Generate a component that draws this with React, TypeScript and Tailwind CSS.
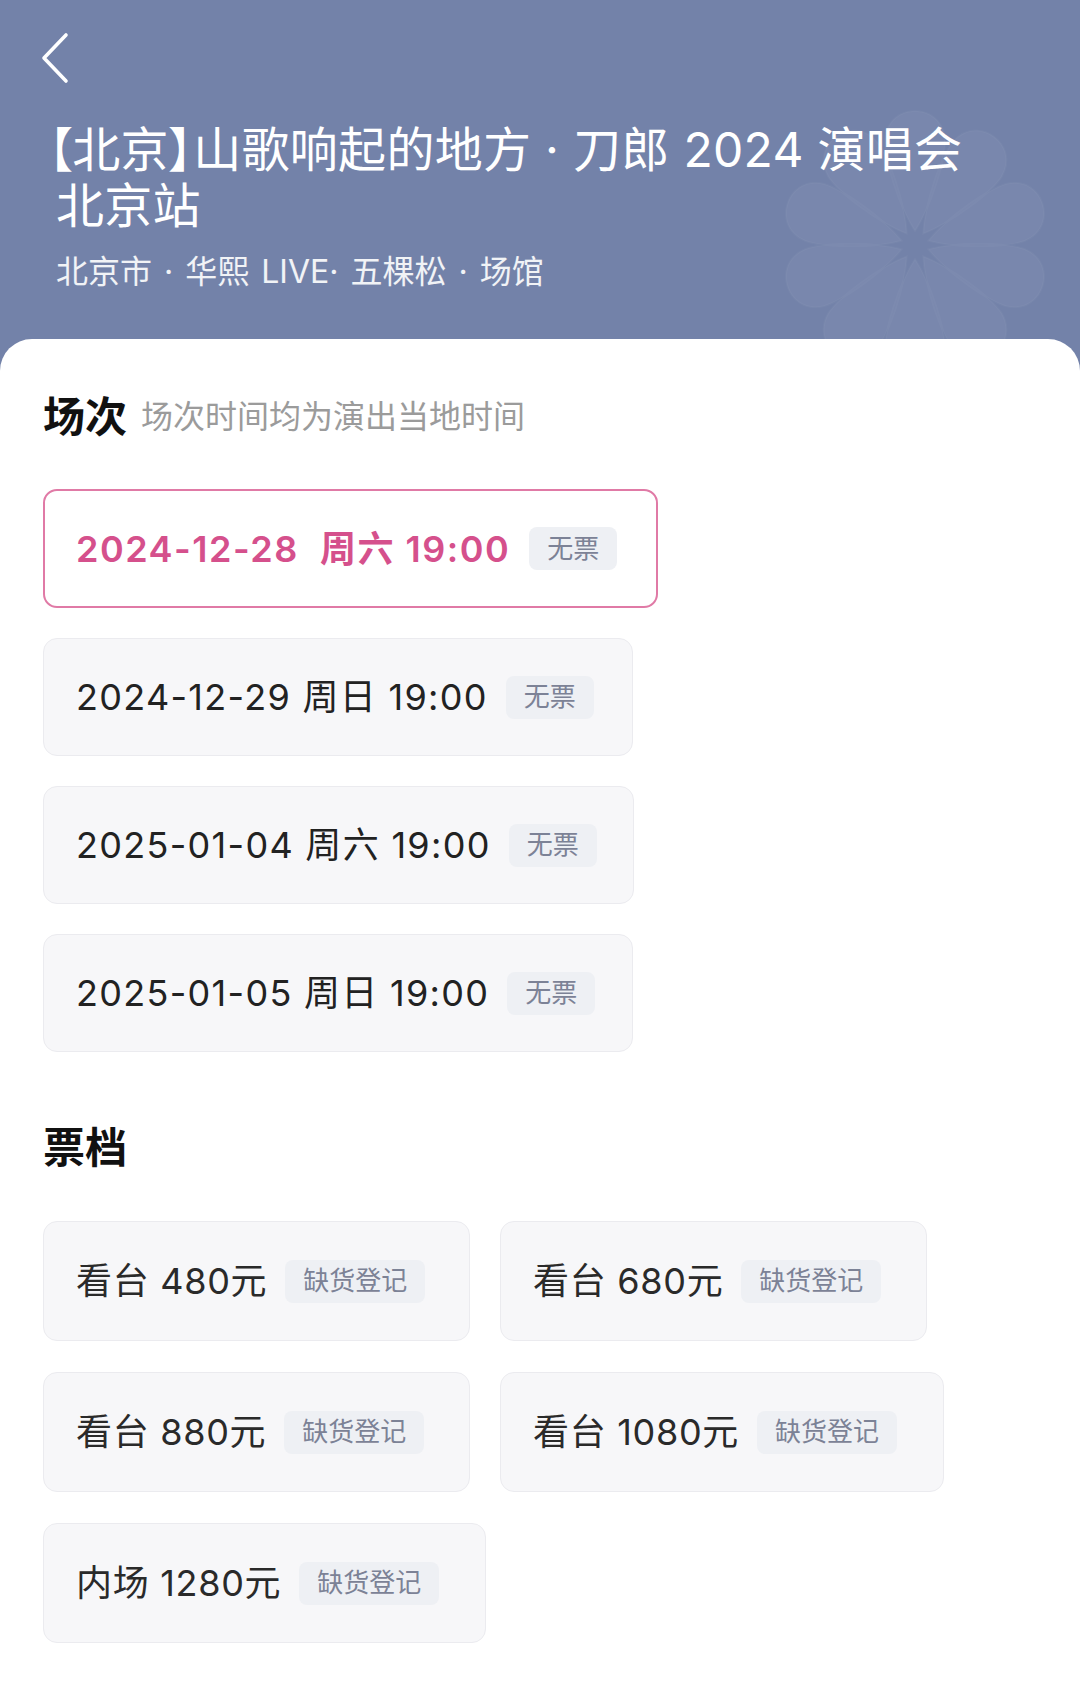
import React from "react";

type Session = { text: string; selected?: boolean; w: string };

const sessions: Session[] = [
  { text: "2024-12-28  周六 19:00", selected: true, w: "w-[615px]" },
  { text: "2024-12-29 周日 19:00", w: "w-[590px]" },
  { text: "2025-01-04 周六 19:00", w: "w-[591px]" },
  { text: "2025-01-05 周日 19:00", w: "w-[590px]" },
];

const tickets = [
  { text: "看台 480元", w: "w-[427px]" },
  { text: "看台 680元", w: "w-[427px]" },
  { text: "看台 880元", w: "w-[427px]" },
  { text: "看台 1080元", w: "w-[444px]" },
  { text: "内场 1280元", w: "w-[443px]" },
];

const PETAL =
  "M0,-14 C17,-40 31,-88 30,-106 C28,-126 13,-134 0,-134 C-13,-134 -28,-126 -30,-106 C-31,-88 -17,-40 0,-14 Z";

function Flower() {
  const petals = Array.from({ length: 10 }, (_, i) => i * 36);
  return (
    <svg
      className="absolute left-[770px] top-[100px] h-[290px] w-[290px]"
      viewBox="-145 -145 290 290"
    >
      <g opacity="0.045" fill="#ffffff">
        {petals.map((a) => (
          <path key={a} d={PETAL} transform={`rotate(${a})`} />
        ))}
      </g>
      <g opacity="0.025" fill="none" stroke="#ffffff" strokeWidth="2">
        {petals.map((a) => (
          <path key={a} d={PETAL} transform={`rotate(${a})`} />
        ))}
      </g>
    </svg>
  );
}

function Badge({ children }: { children: React.ReactNode }) {
  return (
    <span className="flex h-[43px] shrink-0 items-center rounded-[8px] bg-[#eef0f4] px-[18px] text-[26px] font-normal leading-none tracking-normal text-[#7c8296]">
      {children}
    </span>
  );
}

export default function App() {
  return (
    <div className="flex min-h-[1693px] w-full flex-col bg-[#7382a9] font-[Inter,'Noto_Sans_CJK_SC',sans-serif]">
      <header className="relative h-[339px] shrink-0 overflow-hidden pl-[56px] pr-[40px]">
        <Flower />
        <div className="relative pt-[32px]">
          <svg className="-ml-[15px] h-[52px] w-[28px]" viewBox="0 0 28 52" fill="none">
            <polyline
              points="25,3 3,26 25,49"
              stroke="#ffffff"
              strokeWidth="3.6"
              strokeLinecap="round"
              strokeLinejoin="round"
            />
          </svg>
          <h1 className="mt-[38px] text-[48px] font-normal leading-[56px] tracking-[0.3px] text-white">
            <span className="-ml-[8px] [font-feature-settings:'palt']">【北京】</span>
            山歌响起的地方 · 刀郎 2024 演唱会
            <br />
            北京站
          </h1>
          <p className="mt-[18px] text-[32px] leading-[40px] text-white/90 [word-spacing:3px]">
            北京市 · 华熙 LIVE· 五棵松 · 场馆
          </p>
        </div>
      </header>

      <main className="flex-1 rounded-t-[32px] bg-white px-[43px] pb-[50px] pt-[50px]">
        <div className="flex items-center leading-[56px]">
          <h2 className="text-[42px] font-bold text-[#111111]">场次</h2>
          <span className="ml-[14px] text-[32px] text-[#9b9b9b]">场次时间均为演出当地时间</span>
        </div>

        <div className="mt-[44px] flex flex-col gap-[30px]">
          {sessions.map((s) =>
            s.selected ? (
              <div
                key={s.text}
                className={`${s.w} flex h-[119px] items-center gap-[19px] rounded-[14px] border-2 border-[#e07aa6] bg-white pl-[31px]`}
              >
                <span className="whitespace-pre text-[36px] font-semibold tracking-[1.5px] text-[#d5508c]">{s.text}</span>
                <Badge>无票</Badge>
              </div>
            ) : (
              <div
                key={s.text}
                className={`${s.w} flex h-[118px] items-center gap-[18px] rounded-[14px] border border-[#ebebef] bg-[#f7f7f9] pl-[32px]`}
              >
                <span className="whitespace-pre text-[36px] tracking-[1.3px] text-[#222222]">{s.text}</span>
                <Badge>无票</Badge>
              </div>
            )
          )}
        </div>

        <h2 className="mt-[68px] text-[42px] font-bold leading-[56px] text-[#111111]">票档</h2>

        <div className="mt-[45px] flex flex-wrap gap-x-[30px] gap-y-[31px]">
          {tickets.map((t) => (
            <div
              key={t.text}
              className={`${t.w} flex h-[120px] items-center gap-[18px] rounded-[14px] border border-[#ebebef] bg-[#f7f7f9] pl-[32px]`}
            >
              <span className="whitespace-pre text-[36px] tracking-[0.7px] text-[#2a2a2a]">{t.text}</span>
              <Badge>缺货登记</Badge>
            </div>
          ))}
        </div>
      </main>
    </div>
  );
}
